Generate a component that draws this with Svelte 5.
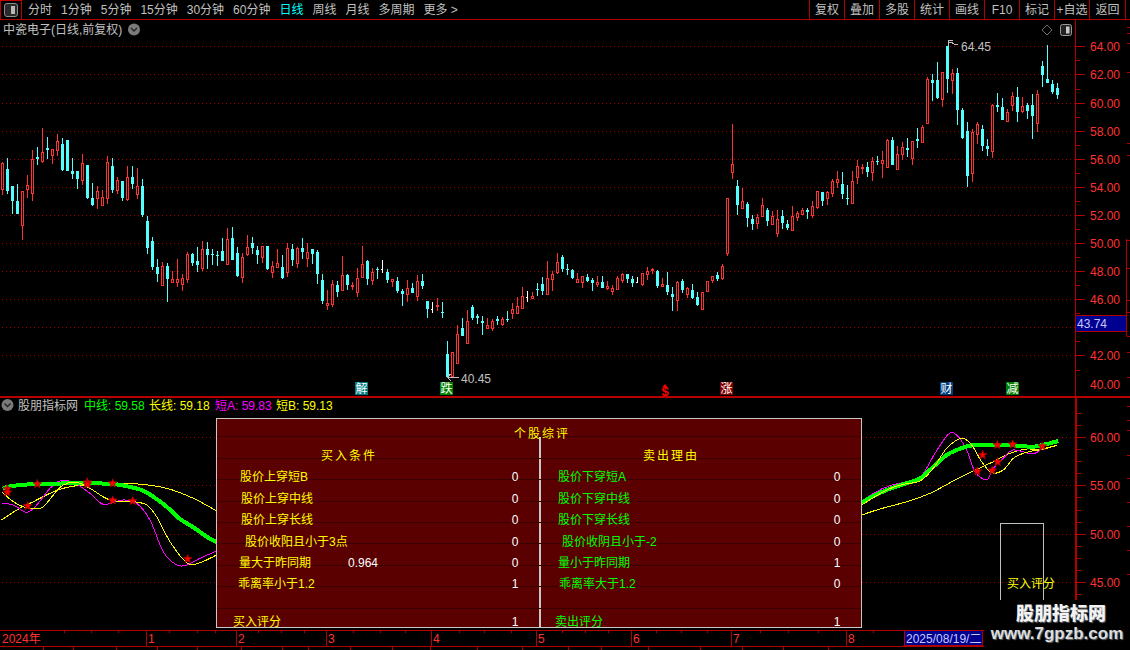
<script>
  const segs = [
    [125, 'r 112 210 114 191|c 99 207 132 198|c 183 267 183 228|c 177 267 228 267|r 198 345 198 299|r 150 219 180 191|r 75 228 102 204|c 66 120 96 102|r 9 114 81 108|c 36 102 69 75|r 72 117 72 90|r 27 93 48 75|c 39 138 57 135|c 45 138 45 138|c 99 162 138 147|c 138 192 138 162|r 87 180 114 165|c 120 222 120 219|c 174 243 219 240|r 183 252 198 219|r 195 240 216 240|r 93 237 111 219|c 99 204 123 195|r 156 207 165 195|c 168 228 168 219|r 123 228 156 222|c 123 192 156 177|r 129 222 183 207|c 162 276 183 270|c 273 387 288 369|c 336 435 348 426|c 402 471 426 447|r 411 480 423 480|c 414 531 423 462|r 438 474 462 471|r 402 486 462 471|r 447 498 459 477|r 381 474 387 462|c 384 423 387 414|c 366 441 408 420|r 348 438 372 429|c 351 432 372 390|c 372 420 387 390|c 378 423 390 393|c 339 408 378 408|r 309 417 342 417|c 306 405 339 405|c 366 456 384 453|r 384 474 396 456|r 330 393 366 387|c 336 387 354 369|c 363 417 375 390|r 363 414 363 396|c 363 435 363 432|r 408 459 423 441|r 372 429 414 426'],
    [235, 'c 60 132 96 129|r 24 126 39 111|c 27 93 42 75|r 36 99 39 84|c 9 72 39 51|r 24 96 51 69|c 42 87 42 57|c 45 147 51 117|c 117 207 135 198|r 165 225 204 210|r 135 216 147 207|c 138 186 150 171|r 63 165 120 165|c 117 165 120 150|r 141 165 150 153|r 99 186 129 171|r 33 126 87 126|c 75 150 78 132|r 99 150 111 135|c 96 132 102 105|w 75 114 102 105|c 102 144 111 135|r 132 156 132 138|c 126 174 138 168|c 162 213 168 177|r 135 201 159 177|c 144 174 159 174|r 120 198 138 183|c 117 162 138 153|c 198 249 198 222|w 201 234 222 225|r 189 228 210 213|c 201 249 231 234|c 318 426 357 426|r 351 423 351 423|r 270 384 297 384|c 249 303 279 303|r 225 324 258 324|c 210 255 216 249|c 237 267 243 249|c 243 300 258 264|r 249 279 270 279|r 252 288 258 279|c 243 270 252 258|r 246 273 252 267|c 228 261 252 255|r 204 252 222 234|r 186 237 213 234|r 156 222 183 219|w 168 201 186 189|r 171 189 183 189|c 144 183 162 165|c 126 180 147 168|r 78 177 129 177|r 108 168 117 132|r 54 117 81 111'],
    [120, 'c 405 456 411 447|c 432 465 447 450|c 447 477 450 474|r 459 489 477 486|r 468 504 468 486|c 462 486 471 483|c 474 513 480 489|r 468 501 486 492|c 468 504 486 504|r 483 510 498 504|r 495 525 504 513|r 468 510 474 507|r 459 489 462 480|c 462 489 462 477|c 468 501 477 489|w 471 489 486 489|r 459 498 459 492|r 441 480 453 462|r 444 462 447 450|c 450 504 453 498|r 474 498 492 498|c 456 525 495 516|c 501 573 522 531|r 483 573 486 540|c 477 519 483 510|r 501 534 504 522|c 492 537 510 534|c 516 558 531 555|r 516 570 516 567|r 483 513 483 513|r 468 489 468 480|c 456 483 465 477|r 432 480 438 474|r 234 408 234 399|r 12 177 132 156|c 180 285 198 255|r 204 264 243 264|c 246 321 252 294|c 285 330 297 312|r 282 327 291 309|r 234 291 255 288|c 264 318 270 303|r 273 312 288 312|r 270 351 297 339|c 270 327 288 309|c 300 330 312 324|r 258 333 288 330|r 273 303 279 291|r 264 285 270 282|c 264 297 270 276|r 243 294 258 285|r 213 267 213 261|c 216 258 216 243|r 213 255 216 234|r 177 231 183 219|r 153 204 177 186'],
    [35, 'c 411 492 447 477|c 450 510 489 492|r 408 507 438 504|r 375 447 393 426|r 387 417 396 399|c 381 426 396 411|r 366 438 378 411|c 363 390 378 381|r 348 429 375 384|r 312 396 315 396|c 306 390 315 390|r 333 405 357 402|r 321 375 336 357|c 309 366 339 345|r 318 390 318 369|c 279 339 312 318|r 270 321 276 321|r 126 264 132 264|c 117 198 135 144|c 81 192 135 189|r 111 216 111 192|c 33 174 33 132|r 102 177 114 135|c 99 270 114 225|c 219 312 225 309|c 261 456 288 423|r 282 441 291 414|r 261 327 267 297|c 270 348 282 333|c 312 363 333 342|r 207 369 210 348|c 174 231 210 216|c 189 255 216 255|r 222 258 231 258|r 171 228 183 210|c 156 261 186 231|r 186 234 213 228|c 204 252 210 228|c 177 312 210 243|r 165 291 177 264|c 78 156 93 120|c 30 144 132 144|c 135 177 147 171|c 144 192 159 180']
  ];

  const candles = [];
  for (const [y0, text] of segs) {
    for (const item of text.split('|')) {
      const [kind, ...nums] = item.split(' ');
      const [hi, lo, top, bot] = nums.map((n) => Math.round(Number(n) / 3 + y0));
      candles.push({ kind, hi, lo, top, bot, x: 2 + 5 * candles.length });
    }
  }

  const toolbarLeft = ['分时', '1分钟', '5分钟', '15分钟', '30分钟', '60分钟', '日线', '周线', '月线', '多周期', '更多 >'];
  const toolbarRight = ['复权', '叠加', '多股', '统计', '画线', 'F10', '标记', '+自选', '返回'];

  const upperGrid = [46.5, 74.5, 103.5, 131.5, 159.5, 187.5, 215.5, 243.5, 271.5, 299.5, 327.5, 355.5];
  const upperLabels = [
    ['64.00', 46.5], ['62.00', 74.5], ['60.00', 103.5], ['58.00', 131.5], ['56.00', 159.5], ['54.00', 187.5],
    ['52.00', 215.5], ['50.00', 243.5], ['48.00', 271.5], ['46.00', 299.5], ['42.00', 355.5], ['40.00', 384]
  ];
  const upperMinor = [60, 89, 117, 145, 173, 201, 229, 257, 285, 313, 341, 370];
  const lowerGrid = [437.5, 485.5, 534.5, 582.5];
  const lowerLabels = [['60.00', 437.5], ['55.00', 485.5], ['50.00', 534.5], ['45.00', 582.5]];
  const lowerMinor = [413, 425, 449, 461, 473, 497, 510, 522, 546, 558, 570, 594];
  const farTicks = [27, 33, 43, 72, 143, 155, 240, 268, 300, 312, 336, 352, 377, 406, 420, 430, 455, 478, 502, 526, 550, 574];

  const markers = [
    { x: 355, bg: '#007a80', t: '解' },
    { x: 440, bg: '#008000', t: '跌' },
    { x: 720, bg: '#800000', t: '涨' },
    { x: 940, bg: '#004080', t: '财' },
    { x: 1006, bg: '#008000', t: '减' }
  ];

  const dates = [['1', 146, 148], ['2', 236, 238], ['3', 326, 328], ['4', 431, 433], ['5', 536, 538], ['6', 631, 633], ['7', 731, 733], ['8', 846, 848]];
  const dateTicks = [64, 91, 118, 169, 197, 215, 258, 281, 304, 353, 380, 405, 459, 484, 511, 562, 585, 608, 656, 681, 707, 760, 788, 818, 873];
  const belowTicks = [43, 73, 116, 157, 197, 241, 282, 308, 350, 392, 430, 477, 522, 568, 601, 648, 700, 742, 783, 828];

  function toScreen(points, ox, oy) {
    return points.map(([x, y]) => [x / 3 + ox, y / 3 + oy]);
  }
  function smooth(points) {
    let d = `M${points[0][0]} ${points[0][1]}`;
    for (let i = 0; i < points.length - 1; i++) {
      const p0 = points[Math.max(0, i - 1)];
      const p1 = points[i];
      const p2 = points[i + 1];
      const p3 = points[Math.min(points.length - 1, i + 2)];
      const c1 = [p1[0] + (p2[0] - p0[0]) / 6, p1[1] + (p2[1] - p0[1]) / 6];
      const c2 = [p2[0] - (p3[0] - p1[0]) / 6, p2[1] - (p3[1] - p1[1]) / 6];
      d += `C${c1[0].toFixed(1)} ${c1[1].toFixed(1)} ${c2[0].toFixed(1)} ${c2[1].toFixed(1)} ${p2[0].toFixed(1)} ${p2[1].toFixed(1)}`;
    }
    return d;
  }
  const leftCurve = (pts) => smooth(toScreen(pts, 0, 395));
  const rightCurve = (pts) => smooth(toScreen(pts, 860, 395));

  const curves = [
    { cls: 'yellow', d: leftCurve([[5,375],[50,345],[100,320],[150,295],[190,280],[230,272],[300,268],[400,266],[500,280],[580,310],[650,348]]) },
    { cls: 'yellow', d: rightCurve([[5,360],[60,342],[140,320],[210,295],[280,258],[340,228],[400,200],[450,175],[500,162],[540,165],[590,150]]) },
    { cls: 'magenta', d: leftCurve([[5,325],[40,330],[80,352],[110,330],[150,280],[180,258],[220,262],[270,295],[310,328],[370,315],[410,325],[450,375],[490,470],[530,510],[560,510],[600,490],[650,468]]) },
    { cls: 'magenta', d: rightCurve([[5,323],[40,295],[90,272],[150,258],[185,242],[225,175],[265,118],[290,120],[320,165],[345,230],[380,254],[400,220],[430,190],[460,165],[520,176],[560,150],[595,137]]) },
    { cls: 'green', d: leftCurve([[8,281],[30,274],[90,268],[150,266],[250,265],[340,267],[400,278],[430,287],[460,305],[500,335],[540,372],[580,397],[620,425],[650,442]]) },
    { cls: 'green', d: rightCurve([[5,325],[30,308],[80,285],[130,268],[180,250],[220,215],[260,180],[290,165],[330,152],[380,150],[450,151],[520,155],[560,147],[595,138]]) },
    { cls: 'yellow', d: leftCurve([[5,290],[40,320],[80,338],[125,338],[160,300],[190,270],[230,262],[270,280],[330,315],[400,320],[440,330],[470,365],[510,440],[560,503],[595,505],[650,480]]) },
    { cls: 'yellow', d: rightCurve([[5,330],[80,285],[130,268],[180,258],[220,220],[260,160],[305,130],[335,150],[365,200],[395,233],[430,225],[460,190],[490,175],[530,165],[590,152]]) }
  ];

  function star(cx, cy, r = 4.5) {
    const pts = [];
    for (let i = 0; i < 10; i++) {
      const rad = i % 2 ? r * 0.42 : r;
      const a = -Math.PI / 2 + (i * Math.PI) / 5;
      pts.push(`${(cx + rad * Math.cos(a)).toFixed(1)},${(cy + rad * Math.sin(a)).toFixed(1)}`);
    }
    return pts.join(' ');
  }
  const stars = [
    ...toScreen([[22,282],[22,292],[83,333],[112,267],[262,262],[262,268],[338,265],[338,316],[398,318],[563,492]], 0, 395),
    ...toScreen([[352,229],[368,180],[397,226],[412,150],[413,201],[458,148],[547,154]], 860, 395)
  ];

  const rows = [
    { buy: '买入条件', sell: '卖出理由', head: true },
    { buy: '股价上穿短B', bx: 23, bv: '0', sell: '股价下穿短A', sx: 17, sv: '0' },
    { buy: '股价上穿中线', bx: 24, bv: '0', sell: '股价下穿中线', sx: 17, sv: '0' },
    { buy: '股价上穿长线', bx: 24, bv: '0', sell: '股价下穿长线', sx: 17, sv: '0' },
    { buy: '股价收阳且小于3点', bx: 28, bv: '0', sell: '股价收阴且小于-2', sx: 21, sv: '0' },
    { buy: '量大于昨同期', bx: 22, extra: '0.964', bv: '0', sell: '量小于昨同期', sx: 17, sv: '1' },
    { buy: '乖离率小于1.2', bx: 21, bv: '1', sell: '乖离率大于1.2', sx: 18, sv: '0' },
    { blank: true },
    { buy: '买入评分', bx: 16, bv: '1', sell: '卖出评分', sx: 14, sv: '1', score: true }
  ];
</script>

<div class="app">
  <header class="toolbar">
    <div class="corner">
      <svg width="14" height="14" viewBox="0 0 14 14" aria-hidden="true">
        <rect x="0.5" y="0.5" width="13" height="13" rx="2.5" fill="#2a2a2a" stroke="#8c8c8c" />
        <rect x="7" y="3" width="4" height="8" fill="#b8b8b8" />
      </svg>
    </div>
    <nav class="periods">
      {#each toolbarLeft as item}
        <span class:active={item === '日线'}>{item}</span>
      {/each}
    </nav>
    <nav class="actions">
      {#each toolbarRight as item}
        <span>{item}</span>
      {/each}
    </nav>
  </header>

  <div class="stage">
    <svg class="chart" viewBox="0 20 1130 630" width="1130" height="630" role="img" aria-label="K线图">
      {#each upperGrid as y}
        <line class="grid" x1="2" x2="1075" y1={y} y2={y} />
      {/each}
      {#each lowerGrid as y}
        <line class="grid" x1="2" x2="1075" y1={y} y2={y} />
      {/each}

      <text class="title" x="3" y="29.5">中瓷电子(日线,前复权)</text>
      <circle cx="134" cy="29.5" r="6" fill="#7a7a7a" />
      <path d="M131 28l3 3 3-3" fill="none" stroke="#222" stroke-width="1.3" />
      <path d="M1047 25l5 5-5 5-5-5z" fill="none" stroke="#6a6a6a" />
      <rect x="1060.5" y="24.5" width="11" height="11" rx="2" fill="#222" stroke="#9a9a9a" />
      <rect x="1066" y="26.5" width="3.5" height="7" fill="#c8c8c8" />

      <g class="crisp">
        {#each candles as c}
          {#if c.kind === 'r'}
            <line class="wick-r" x1={c.x + 0.5} x2={c.x + 0.5} y1={c.hi} y2={c.lo} />
            <rect class="body-r" x={c.x - 0.5} y={c.top + 0.5} width="2" height={Math.max(c.bot - c.top, 1)} />
          {:else if c.kind === 'c'}
            <line class="wick-c" x1={c.x + 0.5} x2={c.x + 0.5} y1={c.hi} y2={c.lo} />
            <rect class="body-c" x={c.x - 1} y={c.top} width="3" height={Math.max(c.bot - c.top, 1)} />
          {:else}
            <line class="wick-w" x1={c.x + 0.5} x2={c.x + 0.5} y1={c.hi} y2={c.lo} />
            <rect class="body-w" x={c.x - 1} y={c.top} width="2" height="1" />
          {/if}
        {/each}
      </g>

      <path class="pointer" d="M948 46V40H953M948 43L951 42L954 44L958 44" />
      <text class="note" x="961" y="46.5">64.45</text>
      <path class="pointer" d="M447 377H459M447 377L451 374M447 377L451 381" />
      <text class="note" x="461" y="378.5">40.45</text>

      {#each markers as m}
        <rect x={m.x} y="382" width="13" height="13" fill={m.bg} />
        <text class="marker" x={m.x + 6.5} y="388.5">{m.t}</text>
      {/each}
      <path d="M665 384l2.5 3h-5z" fill="#ff0000" />
      <text class="dollar" x="665" y="391.5">$</text>

      <line class="rule" x1="0" x2="1130" y1="397" y2="397" />

      <circle cx="7.5" cy="405" r="6" fill="#7a7a7a" />
      <path d="M4.5 403.5l3 3 3-3" fill="none" stroke="#222" stroke-width="1.3" />
      <text class="title" x="18" y="405.5">股朋指标网</text>
      <text class="series" x="84" y="405.5" fill="#00ff00">中线: 59.58</text>
      <text class="series" x="149" y="405.5" fill="#ffff00">长线: 59.18</text>
      <text class="series" x="215" y="405.5" fill="#ff00ff">短A: 59.83</text>
      <text class="series" x="276" y="405.5" fill="#ffff00">短B: 59.13</text>

      <g class="crisp">
        {#each curves as curve}
          <path class={curve.cls} d={curve.d} />
        {/each}
      </g>
      {#each stars as [x, y]}
        <polygon class="star" points={star(x, y)} />
      {/each}

      <path class="box" d="M1000.5 600V523.5H1043.5V600" />
      <text class="boxlabel" x="1007" y="584">买入评分</text>

      <line class="axis" x1="1075.5" x2="1075.5" y1="20" y2="396" />
      <line class="axis thick" x1="1076" x2="1076" y1="396" y2="630" />
      <line class="axis" x1="1126.5" x2="1126.5" y1="239" y2="336" />
      {#each upperMinor as y}
        <line class="axis" x1="1076" x2="1080" y1={y + 0.5} y2={y + 0.5} />
      {/each}
      {#each lowerMinor as y}
        <line class="axis" x1="1077" x2="1081" y1={y + 0.5} y2={y + 0.5} />
      {/each}
      {#each upperGrid.slice(0, 10).concat([355.5]) as y}
        <line class="axis" x1="1076" x2="1085" y1={y} y2={y} />
      {/each}
      {#each lowerGrid as y}
        <line class="axis" x1="1077" x2="1086" y1={y} y2={y} />
      {/each}
      {#each farTicks as y}
        <line class="axis" x1="1127" x2="1130" y1={y + 0.5} y2={y + 0.5} />
      {/each}
      {#each upperLabels as [label, y]}
        <text class="price" x="1090" y={y + 0.5}>{label}</text>
      {/each}
      {#each lowerLabels as [label, y]}
        <text class="price" x="1090" y={y + 0.5}>{label}</text>
      {/each}

      <rect class="tag" x="1075.5" y="315.5" width="51" height="16" />
      <text class="tagtext" x="1077" y="323.5">43.74</text>

      <line class="axis" x1="0" x2="984" y1="630.5" y2="630.5" />
      <line class="axis" x1="0" x2="984" y1="646.5" y2="646.5" />
      {#each dateTicks as x}
        <line class="axis" x1={x + 0.5} x2={x + 0.5} y1="631" y2="633" />
      {/each}
      {#each belowTicks as x}
        <line class="axis" x1={x + 0.5} x2={x + 0.5} y1="647" y2="650" />
      {/each}
      <text class="date" x="2" y="639">2024年</text>
      {#each dates as [label, line, tx]}
        <line class="axis" x1={line + 0.5} x2={line + 0.5} y1="631" y2="646" />
        <text class="date" x={tx} y="639">{label}</text>
      {/each}
      <rect class="tag" x="904.5" y="630.5" width="78" height="15" />
      <text class="tagtext" x="906" y="638.5">2025/08/19/二</text>
    </svg>

    <section class="panel">
      <div class="panel-title">个股综评</div>
      {#each rows as row}
        <div class="row">
          <div class="cell buy" class:head={row.head} class:score={row.score}>
            {#if !row.blank}
              <span class="label" style:padding-left={row.bx ? `${row.bx}px` : null}>{row.buy}</span>
              <span class="extra">{row.extra ?? ''}</span>
              <span class="value">{row.bv ?? ''}</span>
            {/if}
          </div>
          <div class="cell sell" class:head={row.head} class:score={row.score}>
            {#if !row.blank}
              <span class="label" style:padding-left={row.sx ? `${row.sx}px` : null}>{row.sell}</span>
              <span class="extra"></span>
              <span class="value">{row.sv ?? ''}</span>
            {/if}
          </div>
        </div>
      {/each}
    </section>

    <aside class="watermark">
      <strong>股朋指标网</strong>
      <span>www.7gpzb.com</span>
    </aside>
  </div>
</div>

<style>
  :global(body) {
    margin: 0;
    background: #000;
  }
  .app {
    width: 1130px;
    height: 650px;
    display: flex;
    flex-direction: column;
    background: #000;
    overflow: hidden;
    font: 12px/1 "Liberation Sans", "Noto Sans CJK SC", sans-serif;
    color: #c0c0c0;
  }
  .toolbar {
    height: 19px;
    flex: none;
    display: flex;
    align-items: stretch;
    box-sizing: content-box;
    border-bottom: 1px solid #b00000;
  }
  .corner {
    width: 22px;
    flex: none;
    display: flex;
    align-items: center;
    justify-content: center;
    border-right: 1px solid #c00000;
    box-sizing: border-box;
    border-left: 1px solid #c00000;
    border-top: 1px solid #c00000;
  }
  .periods {
    display: flex;
    align-items: center;
    gap: 9px;
    padding-left: 6px;
  }
  .periods span {
    white-space: pre;
  }
  .periods .active {
    color: #00ffff;
  }
  .actions {
    margin-left: auto;
    display: flex;
    padding-right: 4px;
  }
  .actions span {
    width: 35px;
    display: flex;
    align-items: center;
    justify-content: center;
    border-left: 1px solid #b00000;
    box-sizing: border-box;
  }
  .actions span:last-child {
    width: 37px;
    border-right: 1px solid #b00000;
  }
  .stage {
    position: relative;
    height: 630px;
    flex: none;
  }
  .chart {
    display: block;
  }
  .chart text {
    font-family: "Liberation Sans", "Noto Sans CJK SC", sans-serif;
    font-size: 12px;
    dominant-baseline: central;
  }
  .grid {
    stroke: #a00000;
    stroke-width: 1;
    stroke-dasharray: 1 3;
    shape-rendering: crispEdges;
  }
  .title,
  .note {
    fill: #c0c0c0;
  }
  .crisp {
    shape-rendering: crispEdges;
  }
  .wick-r {
    stroke: #ff3232;
  }
  .body-r {
    fill: #000;
    stroke: #ff3232;
    stroke-width: 1;
  }
  .wick-c {
    stroke: #54ffff;
  }
  .body-c {
    fill: #54ffff;
  }
  .wick-w {
    stroke: #ffffff;
  }
  .body-w {
    fill: #ffffff;
  }
  .pointer {
    fill: none;
    stroke: #c0c0c0;
    stroke-width: 1;
    shape-rendering: crispEdges;
  }
  .chart .marker {
    fill: #ffffff;
    text-anchor: middle;
  }
  .chart .dollar {
    fill: #ff0000;
    font-weight: 700;
    font-size: 13px;
    text-anchor: middle;
  }
  .rule {
    stroke: #b80000;
    stroke-width: 2;
    shape-rendering: crispEdges;
  }
  .yellow,
  .magenta,
  .green {
    fill: none;
  }
  .yellow {
    stroke: #ffff00;
    stroke-width: 1;
  }
  .magenta {
    stroke: #ff00ff;
    stroke-width: 1;
  }
  .green {
    stroke: #00ff00;
    stroke-width: 4;
  }
  .star {
    fill: #ff0000;
    stroke: #a80000;
    stroke-width: 0.8;
  }
  .box {
    fill: none;
    stroke: #c0c0c0;
    stroke-width: 1;
    shape-rendering: crispEdges;
  }
  .boxlabel {
    fill: #ffff00;
  }
  .axis {
    stroke: #b00000;
    stroke-width: 1;
    shape-rendering: crispEdges;
  }
  .thick {
    stroke-width: 2;
  }
  .price,
  .date {
    fill: #ff3232;
  }
  .tag {
    fill: #000090;
    stroke: #b00000;
    stroke-width: 1;
    shape-rendering: crispEdges;
  }
  .tagtext {
    fill: #c8c8ff;
  }
  .panel {
    position: absolute;
    left: 216px;
    top: 398px;
    width: 646px;
    height: 210px;
    box-sizing: border-box;
    overflow: hidden;
    border: 1px solid #c8c8c8;
    background: #5a0000;
    color: #ffff00;
  }
  .panel-title {
    height: 18.4px;
    box-sizing: border-box;
    border-bottom: 1px solid #3a0000;
    padding: 9px 0 0 6px;
    text-align: center;
    letter-spacing: 2px;
    line-height: 12px;
  }
  .row {
    height: 21.4px;
    box-sizing: border-box;
    border-bottom: 1px solid #3a0000;
    display: grid;
    grid-template-columns: 322px 322px;
    grid-template-rows: 20.4px;
    line-height: 12px;
  }
  .cell {
    display: grid;
    grid-template-columns: 131px 1fr 12px;
    align-items: start;
    padding: 12.6px 18px 0 0;
    box-sizing: border-box;
    white-space: nowrap;
  }
  .cell.sell {
    border-left: 2px solid #c8c8c8;
    color: #00ff00;
  }
  .cell.score {
    padding-top: 7.5px;
  }
  .extra,
  .value {
    color: #ffffff;
  }
  .value {
    text-align: center;
  }
  .cell.head {
    color: #ffff00;
    padding-left: 104px;
    padding-top: 12.6px;
    letter-spacing: 2px;
  }
  .cell.head.sell {
    padding-left: 102px;
  }
  .watermark {
    position: absolute;
    right: 0;
    top: 580px;
    width: 146px;
    height: 50px;
    background: #000;
    display: flex;
    flex-direction: column;
    align-items: center;
    color: #f2f2f2;
    font-weight: 700;
    text-shadow: 1px 1px 1px #666;
  }
  .watermark strong {
    font-size: 18px;
    line-height: 24px;
    margin-top: 2px;
    padding-left: 8px;
  }
  .watermark span {
    font-size: 17px;
    line-height: 16px;
    color: #dcdcdc;
  }
</style>
